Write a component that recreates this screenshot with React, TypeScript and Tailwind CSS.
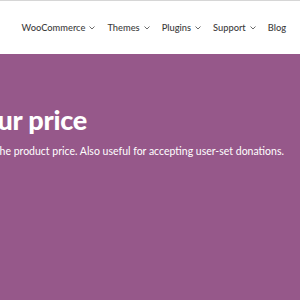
import React from 'react';

const navItems = [
  { label: 'WooCommerce', menu: true },
  { label: 'Themes', menu: true },
  { label: 'Plugins', menu: true },
  { label: 'Support', menu: true },
  { label: 'Blog', menu: false },
];

const Chevron: React.FC = () => (
  <svg width="6" height="4" viewBox="0 0 6 4" className="ml-[4px] mt-[1px]">
    <path d="M0.5 0.5 L3 3 L5.5 0.5" fill="none" stroke="#6b6b6b" strokeWidth="1" />
  </svg>
);

export default function App() {
  return (
    <div className="w-[300px] h-[300px] overflow-hidden bg-[#96588a] font-['Lato',sans-serif]">
      <header className="h-[54px] bg-white border-t border-[#d6d6d6] flex items-center justify-end pr-[14px] gap-[12px]">
        {navItems.map((item) => (
          <a key={item.label} className="flex items-center text-[9.3px] font-medium text-[#3c3c3c] whitespace-nowrap">
            {item.label}
            {item.menu && <Chevron />}
          </a>
        ))}
      </header>
      <section className="pt-[49px] whitespace-nowrap text-white">
        <h1 className="-ml-[108px] text-[27px] leading-[34px] font-black tracking-[-0.2px]">
          Name your price
        </h1>
        <p className="-ml-[127px] mt-[6px] text-[10.5px] leading-[16px]">
          Allow customers to define the product price. Also useful for accepting user-set donations.
        </p>
      </section>
    </div>
  );
}
